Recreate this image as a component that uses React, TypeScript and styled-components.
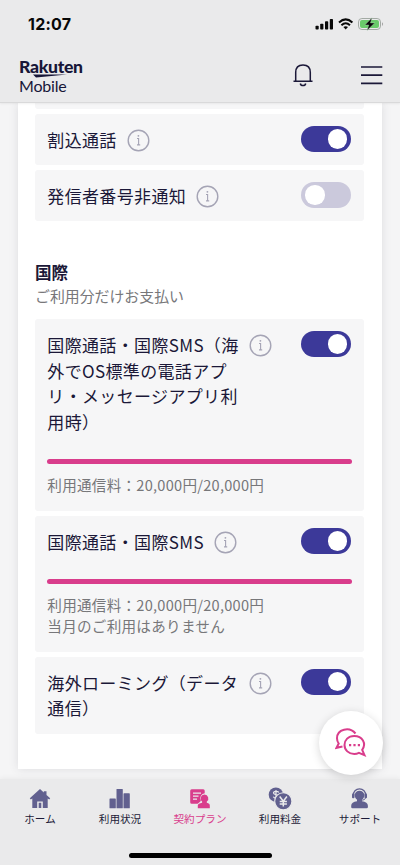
import React from "react";
import styled, { createGlobalStyle } from "styled-components";

const NAVY = "#1b1838";
const PINK = "#d93d8c";
const INDIGO = "#3c3999";
const MUTED = "#61608f";

const GlobalStyle = createGlobalStyle`
  * { box-sizing: border-box; }
  html, body { margin: 0; padding: 0; }
  body {
    font-family: "Noto Sans CJK JP", "Noto Sans", sans-serif;
    color: ${NAVY};
    background: #f5f5f6;
  }
  h2, p { margin: 0; }
  button { border: 0; padding: 0; background: none; font: inherit; color: inherit; }
`;

const Screen = styled.div`
  position: relative;
  display: flex;
  flex-direction: column;
  width: 400px;
  height: 865px;
  overflow: hidden;
`;

const TopArea = styled.header`
  flex: none;
  height: 103px;
  background: #eaeaeb;
  border-bottom: 1px solid #d9d9da;
  box-shadow: 0 1px 2px rgba(0, 0, 0, 0.06);
  z-index: 1;
`;

const StatusBar = styled.div`
  display: flex;
  justify-content: space-between;
  align-items: center;
  height: 48px;
  padding: 0 16px 0 28px;
`;

const Clock = styled.span`
  font-family: Inter, sans-serif;
  font-size: 16px;
  font-weight: 700;
  line-height: 20px;
  letter-spacing: 0.25px;
  color: #080808;
`;

const StatusIcons = styled.svg`
  display: block;
  width: 70px;
  height: 14px;
`;

const Bar = styled.div`
  display: flex;
  align-items: center;
  height: 54px;
  padding: 0 17px 0 19px;
`;

const Brand = styled.div`
  position: relative;
  display: flex;
  flex-direction: column;
  flex: 1;
  padding-top: 2.5px;
  color: #171638;
`;

const BrandName = styled.span`
  font-family: Lato, sans-serif;
  font-size: 17.6px;
  font-weight: 900;
  line-height: 18px;
  letter-spacing: -0.3px;
`;

const BrandSub = styled.span`
  margin-top: 0.5px;
  font-family: Lato, sans-serif;
  font-size: 16px;
  line-height: 19px;
  letter-spacing: -0.2px;
`;

const Swoosh = styled.svg`
  position: absolute;
  left: 14px;
  top: 19px;
  width: 38px;
  height: 4px;
`;

const BellIcon = styled.svg`
  width: 22px;
  height: 24px;
  margin-right: 47px;
`;

const MenuIcon = styled.svg`
  width: 22px;
  height: 22px;
`;

const Main = styled.main`
  flex: none;
  height: 676px;
  padding: 0 18px;
  overflow: hidden;
  background: #f5f5f6;
`;

const Panel = styled.section`
  height: 666px;
  padding: 0 18px 0 17px;
  background: #fff;
  box-shadow: 0 0 9px rgba(60, 60, 80, 0.13);
`;

const Rows = styled.div`
  display: flex;
  flex-direction: column;
  gap: 5px;
`;

const RowEnd = styled.div`
  height: 6px;
  border-radius: 0 0 3px 3px;
  background: #f6f6f7;
`;

const Row = styled.article<{ $height: number }>`
  height: ${(p) => p.$height}px;
  padding: 12px 12.8px 0 12.3px;
  border-radius: 3px;
  background: #f6f6f7;
`;

const RowHead = styled.div`
  display: flex;
  align-items: flex-start;
`;

const Title = styled.p<{ $wrap?: boolean }>`
  width: ${(p) => (p.$wrap ? "192px" : "auto")};
  margin: 1px 0;
  font-size: 17px;
  line-height: 25.7px;
  letter-spacing: 0.35px;
  white-space: nowrap;
`;

const InfoSvg = styled.svg`
  flex: none;
  width: 23px;
  height: 23px;
  margin: 3px 0 0 9.8px;
`;

const Track = styled.button<{ $on: boolean }>`
  display: flex;
  flex: none;
  align-items: center;
  justify-content: ${(p) => (p.$on ? "flex-end" : "flex-start")};
  width: 50px;
  height: 26px;
  margin-left: auto;
  padding: 0 4px;
  border-radius: 13px;
  background: ${(p) => (p.$on ? INDIGO : "#cbc9dc")};
`;

const Knob = styled.span`
  width: 19.5px;
  height: 19.5px;
  border-radius: 50%;
  background: #fff;
`;

const Heading = styled.h2`
  margin-top: 38px;
  font-size: 16.6px;
  font-weight: 700;
  line-height: 26px;
`;

const SubHeading = styled.p`
  height: 34px;
  font-size: 14.9px;
  line-height: 22px;
  color: #77777a;
`;

const Meter = styled.div<{ $top: number }>`
  width: 304.5px;
  height: 4.5px;
  margin-top: ${(p) => p.$top}px;
  border-radius: 3px;
  background: ${PINK};
`;

const Usage = styled.p`
  margin-top: 10px;
  font-size: 14.6px;
  line-height: 21.7px;
  letter-spacing: 0.25px;
  color: #77777a;
  white-space: nowrap;
`;

const ChatButton = styled.button`
  position: absolute;
  left: 319px;
  top: 711px;
  z-index: 3;
  display: grid;
  place-items: center;
  width: 64px;
  height: 64px;
  border-radius: 50%;
  background: #fff;
  box-shadow: 0 2px 10px rgba(0, 0, 0, 0.16);
`;

const ChatIcon = styled.svg`
  width: 32px;
  height: 32px;
`;

const BottomArea = styled.footer`
  display: flex;
  flex-direction: column;
  align-items: center;
  flex: 1;
  background: #eaeaeb;
  box-shadow: 0 -1px 5px rgba(0, 0, 0, 0.05);
  z-index: 2;
`;

const Tabs = styled.nav`
  display: grid;
  grid-template-columns: repeat(5, 80px);
  height: 73.5px;
`;

const Tab = styled.button<{ $active?: boolean }>`
  display: flex;
  flex-direction: column;
  align-items: center;
  padding-top: 7.5px;
  color: ${(p) => (p.$active ? PINK : MUTED)};
`;

const TabIcon = styled.svg`
  width: 24px;
  height: 24px;
`;

const TabLabel = styled.span<{ $active?: boolean }>`
  margin-top: 0.5px;
  font-size: 10.6px;
  font-weight: 400;
  line-height: 16px;
  white-space: nowrap;
  color: ${(p) => (p.$active ? PINK : "#1c1a38")};
`;

const HomeIndicator = styled.div`
  width: 143px;
  height: 5px;
  border-radius: 3px;
  background: #000;
`;

const Info = () => (
  <InfoSvg viewBox="0 0 23 23" fill="none" stroke="#a5a4b5">
    <circle cx="11.5" cy="11.5" r="10.3" strokeWidth="1.4" />
    <path d="M10 9.5h1.6v6.3M10 15.9h3.2" strokeWidth="1.1" />
    <circle cx="11.4" cy="6.8" r=".9" fill="#a5a4b5" stroke="none" />
  </InfoSvg>
);

type SettingProps = {
  lines: string[];
  height: number;
  on?: boolean;
  usage?: string[];
  meterTop?: number;
};

const Lines = ({ lines }: { lines: string[] }) => (
  <>
    {lines.map((line, i) => (
      <React.Fragment key={line}>
        {i > 0 && <br />}
        {line}
      </React.Fragment>
    ))}
  </>
);

const Setting = ({ lines, height, on = true, usage, meterTop = 0 }: SettingProps) => (
  <Row $height={height}>
    <RowHead>
      <Title $wrap={lines.length > 1}>
        <Lines lines={lines} />
      </Title>
      <Info />
      <Track $on={on} role="switch" aria-checked={on}>
        <Knob />
      </Track>
    </RowHead>
    {usage && (
      <>
        <Meter $top={meterTop} />
        <Usage>
          <Lines lines={usage} />
        </Usage>
      </>
    )}
  </Row>
);

const tabs = [
  {
    label: "ホーム",
    icon: (
      <path
        fill="currentColor"
        fillRule="evenodd"
        d="M12 2 1.8 11.2l1 1.3 1.5-1V21h4.9v-6.5h5.6V21h4.9v-9.5l1.500 1 1-1.300-3.700-3.300V4.200h-2.700v1.300zM10.700 15.800h2.600V21h-2.600z"
      />
    ),
  },
  {
    label: "利用状況",
    icon: (
      <g fill="currentColor">
        <rect x="1.5" y="11.5" width="6.3" height="9.8" rx=".6" />
        <rect x="8.5" y="2" width="6.3" height="19.3" rx=".6" />
        <rect x="15.5" y="6.3" width="6.3" height="15" rx=".6" />
      </g>
    ),
  },
  {
    label: "契約プラン",
    active: true,
    icon: (
      <>
        <path
          fill="currentColor"
          d="M3.7 2.2h11.5a1.5 1.5 0 0 1 1.5 1.5v2.6a5 5 0 0 0-4.2 6.5l.4 1.1-3.2 2.8h-6a1.5 1.5 0 0 1-1.5-1.5V3.7a1.5 1.5 0 0 1 1.5-1.5z"
        />
        <path d="M5 6.2h8M5 9.2h5.5M5 12.2h4" stroke="#eaeaeb" strokeWidth="1.2" />
        <path
          fill="currentColor"
          d="M16.5 7.5a3.9 3.9 0 0 1 2.3 7v1.2c2 .4 3 1.2 3 2.8v2.8H9.8v-2.8c0-1.6 1.8-2.4 4.3-2.8v-1.2a3.9 3.9 0 0 1 2.4-7z"
        />
      </>
    ),
  },
  {
    label: "利用料金",
    icon: (
      <>
        <circle cx="7.9" cy="7.7" r="7.2" fill="currentColor" />
        <path
          d="M10.8 5.5C9.9 3.9 5.5 4 5.5 6.1c0 2.1 4.8 1.1 4.8 3.4 0 1.9-4 2-5 .2M8 3v9.3"
          stroke="#eaeaeb"
          strokeWidth="1.2"
          fill="none"
        />
        <circle cx="15.3" cy="14.3" r="8.6" fill="currentColor" stroke="#eaeaeb" strokeWidth="1.1" />
        <path
          d="m11.7 9.5 3.6 4.7 3.6-4.7M15.3 14v5.4M11.7 14.4h7.2M11.7 17h7.2"
          stroke="#eaeaeb"
          strokeWidth="1.5"
          fill="none"
        />
      </>
    ),
  },
  {
    label: "サポート",
    icon: (
      <>
        <path d="M5.2 9.2C4.5-.6 18.5-.6 17.8 9.2" stroke="currentColor" strokeWidth="1.3" fill="none" />
        <rect x="4" y="6.5" width="2.5" height="4.7" rx="1" fill="currentColor" />
        <rect x="16.5" y="6.5" width="2.5" height="4.7" rx="1" fill="currentColor" />
        <circle cx="11.5" cy="8.5" r="4.8" fill="currentColor" />
        <path d="M17.5 10.5c0 2-2 2.7-4.5 2.7" stroke="currentColor" strokeWidth="1" fill="none" />
        <path
          d="M9 12h5v2.3c3.7.4 5.9 2 5.9 4.5V20a1.3 1.3 0 0 1-1.3 1.3H4.5A1.3 1.3 0 0 1 3.2 20v-1.2c0-2.5 2.1-4.1 5.8-4.5z"
          fill="currentColor"
        />
      </>
    ),
  },
];

export default function App() {
  return (
    <Screen>
      <GlobalStyle />
      <TopArea>
        <StatusBar>
          <Clock>12:07</Clock>
          <StatusIcons viewBox="0 0 70 14" fill="none">
            <g fill="#080808">
              <rect x="1.5" y="8.8" width="3.2" height="3.8" rx=".8" />
              <rect x="6.2" y="6.8" width="3.2" height="5.8" rx=".8" />
              <rect x="11" y="4.3" width="3.2" height="8.3" rx=".8" />
              <rect x="15.8" y="2" width="3.2" height="10.6" rx=".8" />
            </g>
            <g stroke="#080808" strokeWidth="2">
              <path d="M25 5.4c4.2-3.8 9.2-3.8 13.4 0M27.4 8.2c2.7-2.4 5.9-2.4 8.6 0" />
            </g>
            <path d="M29.4 10c1.4-1.1 3.2-1.1 4.6 0l-2.3 2.5z" fill="#080808" />
            <rect x="44.5" y="1.5" width="22" height="11" rx="3.4" stroke="#a3aaa4" />
            <rect x="46" y="3" width="19" height="8" rx="2" fill="#69ca6a" />
            <path d="M68 5.2v3.6c1.4-.4 1.4-3.2 0-3.6z" fill="#a3a3a3" />
            <path d="m58 .8-7.2 7.2h4L53 13.5l7.7-7.6h-4.2z" fill="#080808" stroke="#bce4bd" strokeWidth=".4" />
          </StatusIcons>
        </StatusBar>
        <Bar>
          <Brand>
            <BrandName>Rakuten</BrandName>
            <BrandSub>Mobile</BrandSub>
            <Swoosh viewBox="0 0 38 4">
              <path d="M0 .5h34L3 3.6z" fill="#171638" />
            </Swoosh>
          </Brand>
          <BellIcon viewBox="0 0 22 24" fill="none" stroke={NAVY} strokeWidth="1.5">
            <path d="M3.7 18V9.5C3.7 4.8 6.5 2 11 2s7.3 2.8 7.3 7.5V18M1.5 18.2h19M8.3 20.5c.6 2.8 4.8 2.8 5.4 0" />
          </BellIcon>
          <MenuIcon viewBox="0 0 22 22" stroke={NAVY} strokeWidth="1.7">
            <path d="M0 3h21.3M0 11.2h21.3M0 19.4h21.3" />
          </MenuIcon>
        </Bar>
      </TopArea>

      <Main>
        <Panel>
          <Rows>
            <RowEnd />
            <Setting lines={["割込通話"]} height={51} />
            <Setting lines={["発信者番号非通知"]} height={51} on={false} />
          </Rows>
          <Heading>国際</Heading>
          <SubHeading>ご利用分だけお支払い</SubHeading>
          <Rows>
            <Setting
              lines={["国際通話・国際SMS（海", "外でOS標準の電話アプ", "リ・メッセージアプリ利", "用時）"]}
              height={192}
              usage={["利用通信料：20,000円/20,000円"]}
              meterTop={23.5}
            />
            <Setting
              lines={["国際通話・国際SMS"]}
              height={135.5}
              usage={["利用通信料：20,000円/20,000円", "当月のご利用はありません"]}
              meterTop={23.5}
            />
            <Setting lines={["海外ローミング（データ", "通信）"]} height={77} />
          </Rows>
        </Panel>
      </Main>

      <ChatButton aria-label="chat">
        <ChatIcon viewBox="0 0 32 32" fill="none" stroke={PINK} strokeWidth="2">
          <path d="M20.5 6.5C14.5-.8 2 2.1 2 11.3c0 2 .6 3.8 1.7 5.2L1.5 20.8l6-1.3" />
          <path d="M27.2 22.8c4.5-6.3.2-13.8-8-13.8-6 0-9.7 4-9.7 9s4.2 9 9.7 9c1.7 0 3.3-.4 4.7-1.1l5.6 2.2z" />
          <path d="M14 18.2h2.2M18.4 18.2h2.2M22.8 18.2h2.2" strokeWidth="2.2" />
        </ChatIcon>
      </ChatButton>

      <BottomArea>
        <Tabs>
          {tabs.map((tab) => (
            <Tab key={tab.label} $active={tab.active}>
              <TabIcon viewBox="0 0 24 24">{tab.icon}</TabIcon>
              <TabLabel $active={tab.active}>{tab.label}</TabLabel>
            </Tab>
          ))}
        </Tabs>
        <HomeIndicator />
      </BottomArea>
    </Screen>
  );
}
